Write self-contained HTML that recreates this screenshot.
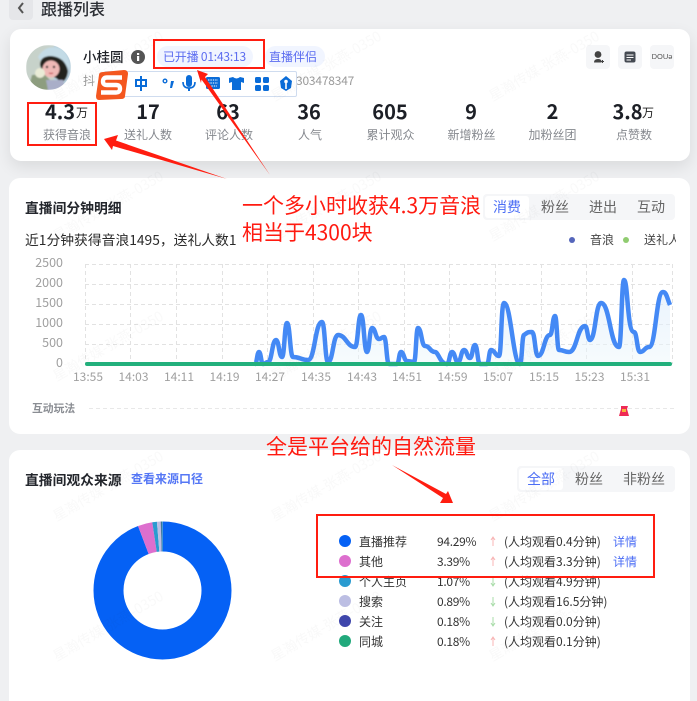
<!DOCTYPE html>
<html style="width:697px;height:701px;overflow:hidden"><head><meta charset="utf-8">
<style>
html,body{margin:0;padding:0}
body{width:697px;height:701px;overflow:hidden;background:#eff0f2;position:relative;font-family:"Liberation Sans","Noto Sans CJK SC",sans-serif;color:#222}
.t,.c,.r{position:absolute;white-space:nowrap;font-family:"Noto Sans CJK SC",sans-serif}
.c{text-align:center;transform:translateX(-50%)}
.card{position:absolute;background:#fff;border-radius:11px}
.num{font-size:20px;font-weight:700;line-height:24px;color:#1c1f26;top:99px}
.lab{font-size:12px;line-height:18px;color:#85888e;top:126px}
.ya{font-size:12.5px;line-height:16px;color:#a0a0a0;width:40px;text-align:right;left:23px}
.xa{font-size:12px;line-height:16px;color:#a0a0a0;top:369px}
.tab{position:absolute;background:#f5f6f8;border-radius:4px}
.act{position:absolute;background:#fff;border-radius:3px}
.tb{font-size:14px;line-height:20px;color:#666}
.ib{position:absolute;top:45px;width:24px;height:24px;background:#f5f6f8;border-radius:4px}
.rn{font-size:12px;line-height:18px;color:#333;left:359px}
.rp{font-size:12px;line-height:18px;color:#333;left:437px;letter-spacing:-.3px}
.ra{font-size:12px;line-height:18px;color:#333;left:504px}
.rd{font-size:12px;line-height:18px;color:#4c6ef5;left:613px}
.dot{position:absolute;width:12px;height:12px;border-radius:50%;left:339px}
.red{font-size:21px;line-height:28px;color:#ff1a10}
.box{position:absolute;border:2px solid #ff1d10;box-sizing:border-box}
.wm{position:absolute;width:160px;text-align:center;font-size:14px;line-height:18px;color:rgba(60,60,60,.03);transform:rotate(-30deg);font-family:"Noto Sans CJK SC",sans-serif;white-space:nowrap}
</style></head><body>

<!-- header -->
<div style="position:absolute;left:9px;top:-4px;width:24px;height:24px;background:#e5e6e9;border-radius:4px"></div>
<svg style="position:absolute;left:9px;top:0" width="24" height="18"><path d="M14 3L10 8L14 13" fill="none" stroke="#555" stroke-width="2"/></svg>
<div class="t" style="left:41px;top:-4px;font-size:16px;line-height:24px;font-weight:500;color:#2a2d33">跟播列表</div>

<!-- card 1 -->
<div class="card" style="left:10px;top:29px;width:680px;height:132px;box-shadow:0 6px 16px rgba(0,0,0,.09)"></div>
<svg style="position:absolute;left:26px;top:45px" width="45" height="45" viewBox="0 0 45 45">
<defs><clipPath id="av"><circle cx="22.500" cy="22.500" r="22.500"/></clipPath><filter id="bl"><feGaussianBlur stdDeviation=".7"/></filter></defs>
<g clip-path="url(#av)"><g filter="url(#bl)">
<rect width="45" height="45" fill="#c7d2ca"/>
<rect x="28" width="17" height="45" fill="#b7cfdc"/>
<path d="M12 12Q20 -2 36 4Q44 12 44 24L30 12L16 18Z" fill="#c3dbe6"/>
<path d="M14 20Q14 11 25 11Q39 12 42 26Q41 36 35 37L30 33L16 26Z" fill="#20231f"/>
<ellipse cx="25" cy="24" rx="8.500" ry="8.500" fill="#efb9b6"/>
<path d="M6 30L18 29L34 45H2Z" fill="#8d9d7f"/>
<path d="M20 35L37 35L40 45H22Z" fill="#a9aec8"/>
<circle cx="14" cy="28" r="5" fill="#e9ebd6"/>
<circle cx="21" cy="22" r="1.200" fill="#222"/><circle cx="28" cy="22" r="1.200" fill="#222"/>
<path d="M23 28Q25 29 27 28" stroke="#c2444f" stroke-width="1.200" fill="none"/>
</g></g></svg>
<div class="t" style="left:83px;top:46px;font-size:13.500px;line-height:20px;font-weight:500;color:#1f2228">小桂圆</div>
<svg style="position:absolute;left:131px;top:50px" width="14" height="14"><circle cx="7" cy="7" r="7" fill="#555"/><rect x="6" y="6" width="2.200" height="5" fill="#fff"/><rect x="6" y="3" width="2.200" height="2" fill="#fff"/></svg>
<div style="position:absolute;left:157px;top:46px;width:96px;height:21px;background:#f1f5ff;border-radius:11px"></div>
<div class="t" style="left:163px;top:47px;font-size:12px;line-height:19px;color:#5b6cf0;letter-spacing:-.2px">已开播 01:43:13</div>
<div style="position:absolute;left:265px;top:46px;width:60px;height:21px;background:#f1f5ff;border-radius:11px"></div>
<div class="t" style="left:269px;top:47px;font-size:12px;line-height:19px;color:#5b6cf0">直播伴侣</div>
<div class="t" style="left:83px;top:72px;font-size:12px;line-height:18px;color:#9a9a9a">抖</div>
<div class="t" style="left:296px;top:72px;font-size:12px;line-height:18px;color:#9a9a9a;letter-spacing:-.2px">303478347</div>

<div class="ib" style="left:586px"></div><div class="ib" style="left:618px"></div><div class="ib" style="left:650px"></div>
<svg style="position:absolute;left:586px;top:45px" width="24" height="24"><circle cx="12" cy="9.500" r="3.400" fill="#444"/><path d="M8 17.500Q8 14 12 14Q15 14 15.500 16V17.500Z" fill="#444"/><path d="M15 16.500H18M16.500 15V18" stroke="#444" stroke-width="1"/></svg>
<svg style="position:absolute;left:618px;top:45px" width="24" height="24"><rect x="6.500" y="6.500" width="11" height="11" rx="2" fill="#454a52"/><path d="M8.500 10H15.500M8.500 12.500H15.500M8.500 15H13" stroke="#fff" stroke-width="1"/></svg>
<div class="t" style="left:650px;top:50px;width:24px;text-align:center;font-size:7.500px;line-height:14px;color:#555;font-family:'Liberation Sans',sans-serif">DOUə</div>

<div class="c num" style="left:60px">4.3</div><div class="t" style="left:76px;top:104px;font-size:12px;line-height:18px;color:#222">万</div>
<div class="c num" style="left:148px">17</div>
<div class="c num" style="left:228px">63</div>
<div class="c num" style="left:309px">36</div>
<div class="c num" style="left:390px">605</div>
<div class="c num" style="left:471px">9</div>
<div class="c num" style="left:552.500px">2</div>
<div class="c num" style="left:627.500px">3.8</div><div class="t" style="left:642px;top:104px;font-size:12px;line-height:18px;color:#222">万</div>
<div class="c lab" style="left:67px">获得音浪</div>
<div class="c lab" style="left:148px">送礼人数</div>
<div class="c lab" style="left:229px">评论人数</div>
<div class="c lab" style="left:310px">人气</div>
<div class="c lab" style="left:390.500px">累计观众</div>
<div class="c lab" style="left:471.500px">新增粉丝</div>
<div class="c lab" style="left:552.500px">加粉丝团</div>
<div class="c lab" style="left:634px">点赞数</div>

<!-- sogou toolbar -->
<div style="position:absolute;left:104px;top:71px;width:193px;height:26px;background:#fff;border:1px solid #cfdcef;box-sizing:border-box;border-radius:2px"></div>
<svg style="position:absolute;left:99px;top:70px;overflow:visible" width="200" height="28" viewBox="0 0 200 28">
<path d="M0 5Q0 2 4 2L25 0Q29 0 29 4L26 26Q26 29 22 29L0 30Q-3 30 -3 26Z" fill="#f4571f"/>
<path d="M23 7.500H8Q4 7.500 4 11.500Q4 15 8 15H17Q21 15 21 18.500Q21 22.500 17 22.500H2" fill="none" stroke="#fff" stroke-width="4.400"/>
<g fill="#0a6cd8" stroke="none">
<path d="M36 9H48V17H36ZM38 11V15H46V11Z"/><rect x="41" y="6" width="2" height="15"/>
<circle cx="66" cy="11" r="1.800" fill="none" stroke="#0a6cd8" stroke-width="1.400"/>
<path d="M72 11H75L73 18H71Z"/>
<rect x="87" y="5" width="6" height="12" rx="3"/><path d="M84 12Q84 18 90 18Q96 18 96 12" fill="none" stroke="#0a6cd8" stroke-width="1.600"/><rect x="89" y="18" width="2" height="3"/>
<rect x="107" y="7" width="14" height="12" rx="1.500" fill="#0a6cd8"/>
<path d="M109 10H119M109 13H119M110 16H118" stroke="#fff" stroke-width="1" stroke-dasharray="1.400 1"/>
<path d="M134 7L130 8L130 13L133 12L133 20H142L142 12L145 13L145 8L141 7Q137.500 10 134 7Z"/>
<rect x="156" y="7" width="6" height="6" rx="1.500"/><rect x="164" y="7" width="6" height="6" rx="1.500"/><rect x="156" y="15" width="6" height="6" rx="1.500"/><rect x="164" y="15" width="6" height="6" rx="1.500"/>
<path d="M187 6L193 11L192 18L187 21L182 18L181 11Z"/><path d="M187 11V19" stroke="#fff" stroke-width="1.600"/><circle cx="187" cy="11.500" r="1.800" fill="#fff"/>
</g></svg>

<!-- card 2 -->
<div class="card" style="left:9px;top:178px;width:681px;height:256px"></div>
<div class="t" style="left:25px;top:197px;font-size:13.800px;line-height:20px;font-weight:700;color:#23262c">直播间分钟明细</div>
<div class="t" style="left:25px;top:229px;font-size:13.800px;line-height:20px;color:#2a2a2a">近1分钟获得音浪1495，送礼人数1</div>
<div class="tab" style="left:483px;top:194px;width:192px;height:26px"></div>
<div class="act" style="left:485px;top:196px;width:44px;height:22px"></div>
<div class="c tb" style="left:507px;top:197px;color:#4c6ef5">消费</div>
<div class="c tb" style="left:555px;top:197px">粉丝</div>
<div class="c tb" style="left:603px;top:197px">进出</div>
<div class="c tb" style="left:651px;top:197px">互动</div>
<div class="dot" style="left:569px;top:237px;width:6px;height:6px;background:#5566bb"></div>
<div class="t" style="left:590px;top:231px;font-size:12px;line-height:18px;color:#444">音浪</div>
<div class="dot" style="left:623px;top:237px;width:6px;height:6px;background:#90cc70"></div>
<div class="t" style="left:644px;top:231px;width:32px;overflow:hidden;font-size:12px;line-height:18px;color:#444">送礼人数</div>

<div class="r ya" style="top:254px">2500</div><div class="r ya" style="top:274px">2000</div><div class="r ya" style="top:294px">1500</div><div class="r ya" style="top:314px">1000</div><div class="r ya" style="top:334px">500</div><div class="r ya" style="top:354px">0</div>

<svg style="position:absolute;left:0;top:0" width="697" height="430">
<defs><linearGradient id="ar" x1="0" y1="0" x2="0" y2="1"><stop offset="0" stop-color="#d8e8fb" stop-opacity=".6"/><stop offset="1" stop-color="#eef8fb" stop-opacity=".5"/></linearGradient></defs>
<g stroke="#e2e2e2" stroke-width="1" stroke-dasharray="4 3" fill="none">
<path d="M85 264.500H672M85 284.500H672M85 304.500H672M85 324.500H672M85 344.500H672"/>
<path d="M85.500 264V364M130.500 264V364M176.500 264V364M222.500 264V364M267.500 264V364M313.500 264V364M358.500 264V364M404.500 264V364M449.500 264V364M495.500 264V364M541.500 264V364M586.500 264V364M632.500 264V364M672.500 264V364"/>
<path d="M89 408.500H675" stroke="#e8e8e8"/>
</g>
<path fill="url(#ar)" d="M255 364C257 364 257 352 259 352C261 352 261 364 263 364C265.500 364 265.500 362 268 362C272 362 272 340 276 340C279 340 279 357 282 357C284.500 357 284.500 323 287 323C290 323 290 357 293 357C300 357 301 360 308 360C315 360 315 322 322 322C325 322 325 362 328 362C333 362 333 335 338 335C346 335 347 347 355 347C358 347 358 315 361 315C364 315 364 352 367 352C369.500 352 369.500 328 372 328C375.500 328 375.500 339 379 339C381.500 339 381.500 337 384 337C386.500 337 386.500 364 389 364L397 364C399 364 399 352 401 352C404 352 404 361 407 361L414 362C416 362 416 328 418 328C421.500 328 421.500 346 425 346C430 346 430 352 435 352C438.500 352 440 364 447 364C449.500 364 449.500 352 452 352C455 352 455 362 458 362C461 362 461 350 464 350C467 350 467 358 470 358C472.500 358 472.500 345 475 345C477.500 345 477.500 364 480 364L487 364C489 364 489 350 491 350C495 350 495 356 499 356C501.500 356 501 303 504 303C511 303 513 364 520 364C522 364 522 335 524 335C528 332 528 332 532 332C535 332 535 356 538 356C544 356 544 335 550 335C552.500 335 552.500 316 555 316C557 316 557 350 559 350C564 350 564 352 569 352C577 352 577 326 585 326C587.500 326 587.500 340 590 340C595.500 340 595.500 303 601 303C610 303 610 347 619 347C621.500 347 621.500 280 624 280C628 280 627 332 634 332C637 332 637 352 640 352C644.500 352 644.500 347 649 347C656 347 656 292 663 292C666.500 292 667 298 670 305L670 364Z"/>
<path fill="none" stroke="#4489f5" stroke-width="4.500" stroke-linejoin="round" d="M255 364C257 364 257 352 259 352C261 352 261 364 263 364C265.500 364 265.500 362 268 362C272 362 272 340 276 340C279 340 279 357 282 357C284.500 357 284.500 323 287 323C290 323 290 357 293 357C300 357 301 360 308 360C315 360 315 322 322 322C325 322 325 362 328 362C333 362 333 335 338 335C346 335 347 347 355 347C358 347 358 315 361 315C364 315 364 352 367 352C369.500 352 369.500 328 372 328C375.500 328 375.500 339 379 339C381.500 339 381.500 337 384 337C386.500 337 386.500 364 389 364L397 364C399 364 399 352 401 352C404 352 404 361 407 361L414 362C416 362 416 328 418 328C421.500 328 421.500 346 425 346C430 346 430 352 435 352C438.500 352 440 364 447 364C449.500 364 449.500 352 452 352C455 352 455 362 458 362C461 362 461 350 464 350C467 350 467 358 470 358C472.500 358 472.500 345 475 345C477.500 345 477.500 364 480 364L487 364C489 364 489 350 491 350C495 350 495 356 499 356C501.500 356 501 303 504 303C511 303 513 364 520 364C522 364 522 335 524 335C528 332 528 332 532 332C535 332 535 356 538 356C544 356 544 335 550 335C552.500 335 552.500 316 555 316C557 316 557 350 559 350C564 350 564 352 569 352C577 352 577 326 585 326C587.500 326 587.500 340 590 340C595.500 340 595.500 303 601 303C610 303 610 347 619 347C621.500 347 621.500 280 624 280C628 280 627 332 634 332C637 332 637 352 640 352C644.500 352 644.500 347 649 347C656 347 656 292 663 292C666.500 292 667 298 670 305"/>
<path d="M87 364H670" stroke="#22b07c" stroke-width="4" stroke-linecap="round"/>
<path d="M621 406H628L627 409L629 416H619L621 409Z" fill="#ee2a55"/><rect x="622" y="409" width="4" height="3" fill="#f7b23b"/>
</svg>

<div class="c xa" style="left:88px">13:55</div><div class="c xa" style="left:133.500px">14:03</div><div class="c xa" style="left:179px">14:11</div><div class="c xa" style="left:224.500px">14:19</div><div class="c xa" style="left:270px">14:27</div><div class="c xa" style="left:316px">14:35</div><div class="c xa" style="left:362px">14:43</div><div class="c xa" style="left:407px">14:51</div><div class="c xa" style="left:452.500px">14:59</div><div class="c xa" style="left:498px">15:07</div><div class="c xa" style="left:544px">15:15</div><div class="c xa" style="left:589.500px">15:23</div><div class="c xa" style="left:635px">15:31</div>
<div class="t" style="left:32px;top:400px;font-size:10.800px;line-height:16px;font-weight:700;color:#8a8d93">互动玩法</div>

<!-- card 3 -->
<div class="card" style="left:9px;top:450px;width:681px;height:251px;border-radius:11px 11px 0 0"></div>
<div class="t" style="left:25px;top:469px;font-size:13.800px;line-height:20px;font-weight:700;color:#23262c">直播间观众来源</div>
<div class="t" style="left:131px;top:470px;font-size:12px;line-height:18px;font-weight:700;color:#5577f5">查看来源口径</div>
<div class="tab" style="left:517px;top:466px;width:158px;height:26px"></div>
<div class="act" style="left:519px;top:468px;width:44px;height:22px"></div>
<div class="c tb" style="left:541px;top:469px;color:#4c6ef5">全部</div>
<div class="c tb" style="left:589px;top:469px">粉丝</div>
<div class="c tb" style="left:644px;top:469px">非粉丝</div>

<svg style="position:absolute;left:92px;top:520px" width="141" height="141" viewBox="0 0 141 141">
<g transform="rotate(-90 70.500 70.500)" fill="none" stroke-width="30">
<circle cx="70.500" cy="70.500" r="54" pathLength="100" stroke="#0561f5" stroke-dasharray="94.29 100"/>
<circle cx="70.500" cy="70.500" r="54" pathLength="100" stroke="#dd6fce" stroke-dasharray="3.39 100" stroke-dashoffset="-94.29"/>
<circle cx="70.500" cy="70.500" r="54" pathLength="100" stroke="#2a9bd0" stroke-dasharray="1.07 100" stroke-dashoffset="-97.68"/>
<circle cx="70.500" cy="70.500" r="54" pathLength="100" stroke="#bcbee3" stroke-dasharray="0.89 100" stroke-dashoffset="-98.75"/>
<circle cx="70.500" cy="70.500" r="54" pathLength="100" stroke="#3f46ac" stroke-dasharray="0.18 100" stroke-dashoffset="-99.64"/>
<circle cx="70.500" cy="70.500" r="54" pathLength="100" stroke="#22a97c" stroke-dasharray="0.18 100" stroke-dashoffset="-99.82"/>
</g></svg>

<div class="dot" style="top:535px;background:#0561f5"></div><div class="dot" style="top:555px;background:#dd6fce"></div><div class="dot" style="top:575px;background:#2a9bd0"></div><div class="dot" style="top:595px;background:#bcbee3"></div><div class="dot" style="top:615px;background:#3f46ac"></div><div class="dot" style="top:635px;background:#22a97c"></div>

<div class="t rn" style="top:533px">直播推荐</div><div class="t rp" style="top:533px">94.29%</div><div class="t ra" style="top:533px">(人均观看0.4分钟)</div><div class="t rd" style="top:533px">详情</div>
<div class="t rn" style="top:553px">其他</div><div class="t rp" style="top:553px">3.39%</div><div class="t ra" style="top:553px">(人均观看3.3分钟)</div><div class="t rd" style="top:553px">详情</div>
<div class="t rn" style="top:573px">个人主页</div><div class="t rp" style="top:573px">1.07%</div><div class="t ra" style="top:573px">(人均观看4.9分钟)</div>
<div class="t rn" style="top:593px">搜索</div><div class="t rp" style="top:593px">0.89%</div><div class="t ra" style="top:593px">(人均观看16.5分钟)</div>
<div class="t rn" style="top:613px">关注</div><div class="t rp" style="top:613px">0.18%</div><div class="t ra" style="top:613px">(人均观看0.0分钟)</div>
<div class="t rn" style="top:633px">同城</div><div class="t rp" style="top:633px">0.18%</div><div class="t ra" style="top:633px">(人均观看0.1分钟)</div>

<svg style="position:absolute;left:488px;top:530px" width="10" height="120" fill="none" stroke-width="1">
<g stroke="#f8b4b4"><path d="M5 7V16M3 10L5 7L7 10"/><path d="M5 27V36M3 30L5 27L7 30"/><path d="M5 107V116M3 110L5 107L7 110"/></g>
<g stroke="#a8dca8"><path d="M5 47V56M3 53L5 56L7 53"/><path d="M5 67V76M3 73L5 76L7 73"/><path d="M5 87V96M3 93L5 96L7 93"/></g>
</svg>

<!-- watermarks -->
<div class="wm" style="left:28px;top:57px">星瀚传媒-张燕-0350</div><div class="wm" style="left:246px;top:57px">星瀚传媒-张燕-0350</div><div class="wm" style="left:464px;top:57px">星瀚传媒-张燕-0350</div>
<div class="wm" style="left:28px;top:197px">星瀚传媒-张燕-0350</div><div class="wm" style="left:246px;top:197px">星瀚传媒-张燕-0350</div><div class="wm" style="left:464px;top:197px">星瀚传媒-张燕-0350</div>
<div class="wm" style="left:28px;top:337px">星瀚传媒-张燕-0350</div><div class="wm" style="left:246px;top:337px">星瀚传媒-张燕-0350</div><div class="wm" style="left:464px;top:337px">星瀚传媒-张燕-0350</div>
<div class="wm" style="left:28px;top:477px">星瀚传媒-张燕-0350</div><div class="wm" style="left:246px;top:477px">星瀚传媒-张燕-0350</div><div class="wm" style="left:464px;top:477px">星瀚传媒-张燕-0350</div>
<div class="wm" style="left:28px;top:617px">星瀚传媒-张燕-0350</div><div class="wm" style="left:246px;top:617px">星瀚传媒-张燕-0350</div><div class="wm" style="left:464px;top:617px">星瀚传媒-张燕-0350</div>

<!-- annotations -->
<div class="box" style="left:153px;top:39px;width:112px;height:30px"></div>
<div class="box" style="left:27px;top:102px;width:70px;height:44px"></div>
<div class="box" style="left:316px;top:514px;width:339px;height:64px"></div>
<svg style="position:absolute;left:0;top:0" width="697" height="701" fill="#ff1d10">
<path d="M104 139L118 135L116 140.500L227 179L113 146L112 150Z"/>
<path d="M197 70L208 74L205 77L270 175L201.500 79.500L201 83Z"/>
<path d="M453 503L448 491L446 494L392 465L443 498L440 503Z"/>
</svg>
<div class="t red" style="left:242px;top:191px">一个多小时收获4.3万音浪</div>
<div class="t red" style="left:242px;top:218px">相当于4300块</div>
<div class="t red" style="left:266px;top:432px">全是平台给的自然流量</div>
</body></html>
